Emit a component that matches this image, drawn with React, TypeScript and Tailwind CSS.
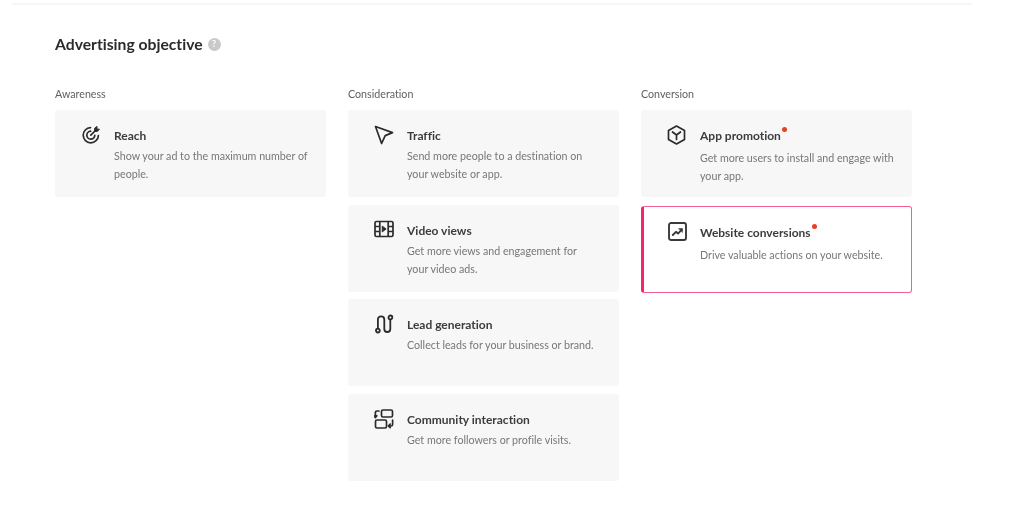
import { ReactNode } from 'react';

const ReachIcon = () => (
  <svg width="20" height="20" viewBox="0 0 20 20" fill="none" stroke="#2b2b2b" strokeWidth="1.7" strokeLinecap="round">
    <path d="M9.500 2.600a7.600 7.600 0 1 0 7.900 7.900" />
    <path d="M9.600 6.200a4 4 0 1 0 4.200 4.200" />
    <path d="M9.800 10.200 15 5" />
    <path d="M13.600 3.600v2.800h2.800L18.400 4.200h-2.400V1.800z" fill="#2b2b2b" strokeWidth="1" />
  </svg>
);

const TrafficIcon = () => (
  <svg width="20" height="20" viewBox="0 0 20 20" fill="none" stroke="#2b2b2b" strokeWidth="1.7" strokeLinejoin="round">
    <path d="M1.500 1.500 18.500 7.600 11.200 10.600 7.600 18.500z" />
  </svg>
);

const VideoIcon = () => (
  <svg width="20" height="18" viewBox="0 0 20 18" fill="none" stroke="#2b2b2b" strokeWidth="1.7">
    <rect x="1" y="1.500" width="18" height="15" rx="1.500" />
    <path d="M5.800 1.500v15M14.200 1.500v15M1 6.500h4.800M1 11.500h4.800M14.200 6.500H19M14.200 11.500H19" />
    <path d="M8.200 6v6l4-3z" fill="#2b2b2b" strokeWidth="0.8" strokeLinejoin="round" />
  </svg>
);

const LeadIcon = () => (
  <svg width="20" height="20" viewBox="0 0 20 20" fill="none" stroke="#2b2b2b" strokeWidth="1.8" strokeLinecap="round">
    <circle cx="3.900" cy="16.600" r="1.900" />
    <circle cx="16.400" cy="3.400" r="1.900" />
    <path d="M3.900 14.600V5.500a3.200 3.200 0 0 1 6.400 0v9.500a3 3 0 0 0 6 0V5.600" />
  </svg>
);

const CommunityIcon = () => (
  <svg width="20" height="20" viewBox="0 0 20 20" fill="none" stroke="#2b2b2b" strokeWidth="1.7" strokeLinecap="round" strokeLinejoin="round">
    <rect x="7.500" y="1" width="11" height="7" rx="1.500" />
    <rect x="1.500" y="11" width="11" height="8" rx="1.500" />
    <path d="M5 2H3a1.600 1.600 0 0 0-1.600 1.600V8.400M0 6.800l1.400 1.700 1.500-1.700" />
    <path d="M18.600 11v4.400A1.600 1.600 0 0 1 17 17h-2.400M16.200 15.200 14.400 17l1.800 1.700" />
  </svg>
);

const AppIcon = () => (
  <svg width="19" height="20" viewBox="0 0 19 20" fill="none" stroke="#2b2b2b" strokeWidth="1.7" strokeLinecap="round" strokeLinejoin="round">
    <path d="M9.500 1 17.500 5.500v9L9.500 19l-8-4.500v-9z" />
    <path d="M5.500 7 9.500 10l4-3M9.500 10v4.500" />
  </svg>
);

const ConversionIcon = () => (
  <svg width="19" height="19" viewBox="0 0 19 19" fill="none" stroke="#3a3a3a" strokeWidth="1.9" strokeLinecap="round" strokeLinejoin="round">
    <rect x="1" y="1" width="17" height="17" rx="2" />
    <path d="M4.800 13 8 9.800l2 1.800 3.800-4" />
    <path d="M10.800 6.600h3.600v3.600z" fill="#3a3a3a" strokeWidth="0.6" />
  </svg>
);

const ObjectiveCard = ({
  icon,
  title,
  description,
  dot,
  selected,
}: {
  icon: ReactNode;
  title: string;
  description: ReactNode;
  dot?: boolean;
  selected?: boolean;
}) => (
  <div
    className={
      selected
        ? 'mt-[1.300px] flex h-[87px] rounded-[3px] border-[1.500px] border-l-[3px] border-[#f5608f] border-l-[#f7246b] bg-white pl-[24px] pt-[15.500px]'
        : 'flex h-[87px] rounded-[3px] bg-[#f7f7f7] pl-[26px] pt-[15px]'
    }
  >
    <div className={selected ? 'w-[32px] shrink-0' : 'w-[33px] shrink-0'}>{icon}</div>
    <div className="-mt-[3px]">
      <div className="relative inline-block text-[12px] font-bold leading-[20px] text-[#3c3c3c]">
        {title}
        {dot && <span className="absolute -right-[6px] top-[1px] h-[5px] w-[5px] rounded-full bg-[#e8401f]" />}
      </div>
      <p className={dot ? 'mt-[3px] text-[10.700px] leading-[18px] text-[#777]' : 'mt-[1px] text-[10.700px] leading-[18px] text-[#777]'}>
        {description}
      </p>
    </div>
  </div>
);

const Column = ({ label, children }: { label: string; children: ReactNode }) => (
  <div className="w-[271px]">
    <div className="mb-[9px] text-[10.700px] leading-[14px] text-[#5f5f5f]">{label}</div>
    <div className="flex flex-col gap-[7.700px]">{children}</div>
  </div>
);

export default function App() {
  return (
    <div className="h-[527px] w-[1024px] overflow-hidden bg-white font-['Lato',sans-serif] [font-variant-ligatures:none] blur-[0.5px]">
      <div className="ml-[12px] mt-[3px] h-[2px] w-[960px] bg-[#f6f6f6]" />
      <div className="pl-[55px]">
        <div className="mt-[28px] flex items-center gap-[5px]">
          <h1 className="text-[15.700px] font-bold leading-[22px] text-[#2b2b2b]">Advertising objective</h1>
          <span className="flex h-[13px] w-[13px] items-center justify-center rounded-full bg-[#c9c9c9] text-[9px] font-bold text-white">?</span>
        </div>
        <div className="mt-[32px] flex gap-[22px]">
          <Column label="Awareness">
            <ObjectiveCard icon={<ReachIcon />} title="Reach" description={<>Show your ad to the maximum number of<br />people.</>} />
          </Column>
          <Column label="Consideration">
            <ObjectiveCard icon={<TrafficIcon />} title="Traffic" description={<>Send more people to a destination on<br />your website or app.</>} />
            <ObjectiveCard icon={<VideoIcon />} title="Video views" description={<>Get more views and engagement for<br />your video ads.</>} />
            <ObjectiveCard icon={<LeadIcon />} title="Lead generation" description="Collect leads for your business or brand." />
            <ObjectiveCard icon={<CommunityIcon />} title="Community interaction" description="Get more followers or profile visits." />
          </Column>
          <Column label="Conversion">
            <ObjectiveCard dot icon={<AppIcon />} title="App promotion" description={<>Get more users to install and engage with<br />your app.</>} />
            <ObjectiveCard dot selected icon={<ConversionIcon />} title="Website conversions" description="Drive valuable actions on your website." />
          </Column>
        </div>
      </div>
    </div>
  );
}
